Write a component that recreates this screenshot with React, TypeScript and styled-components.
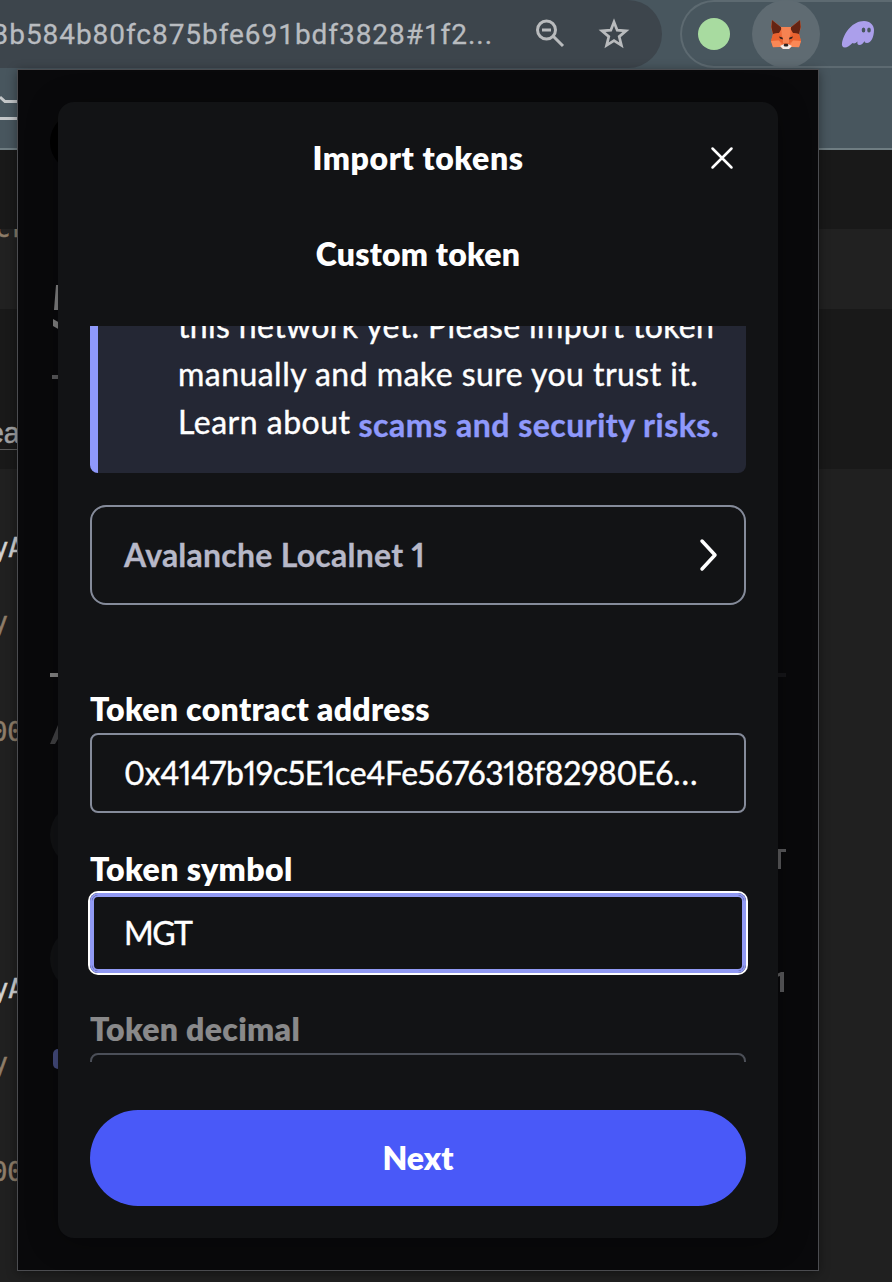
import React from "react";
import styled, { createGlobalStyle } from "styled-components";

const Global = createGlobalStyle`
  * { box-sizing: border-box; }
  html, body { margin: 0; background: #1f1f1f; }
  body { width: 892px; height: 1282px; overflow: hidden; font-family: Lato, "Open Sans", sans-serif; }
`;

const Page = styled.main`
  position: relative;
  width: 892px;
  height: 1282px;
  overflow: hidden;
  background: #202020;
`;

const BrowserBar = styled.header`
  height: 69px;
  display: flex;
  background: #48565e;
`;

const UrlBar = styled.div`
  width: 662px;
  flex: none;
  height: 68px;
  display: flex;
  align-items: center;
  background: #3d454c;
  border-radius: 0 34px 34px 0;
`;

const Url = styled.div`
  width: 493px;
  display: flex;
  justify-content: flex-end;
  white-space: nowrap;
  overflow: hidden;
  font: 400 28px/40px Roboto, sans-serif;
  padding-top: 2px;
  -webkit-text-stroke: 0.3px currentColor;
  letter-spacing: 0.95px;
  color: #b9bcc0;
`;

const ZoomIcon = styled.svg`
  width: 30px;
  height: 30px;
  margin-left: 42px;
`;

const StarIcon = styled.svg`
  width: 32px;
  height: 32px;
  margin: -3px 0 0 33px;
`;

const Extensions = styled.div`
  width: 212px;
  flex: none;
  height: 68px;
  margin-left: 18px;
  padding-left: 16px;
  display: flex;
  align-items: center;
  border: 2px solid #5d6a71;
  border-right: 0;
  border-radius: 34px 0 0 34px;
`;

const GreenDot = styled.i`
  width: 32px;
  height: 32px;
  flex: none;
  border-radius: 50%;
  background: #a8dba0;
`;

const FoxButton = styled.span`
  width: 68px;
  height: 68px;
  margin-left: 22px;
  flex: none;
  border-radius: 50%;
  background: #5f6b72;
  display: grid;
  place-items: center;
`;

const Ghost = styled.svg`
  width: 34px;
  height: 28px;
  flex: none;
  margin-left: 21px;
`;

const Strip = styled.div<{ $h: number; $bg: string; $line?: string }>`
  height: ${(p) => p.$h}px;
  background: ${(p) => p.$bg};
  border-bottom: ${(p) => (p.$line ? `2px solid ${p.$line}` : "0")};
  overflow: hidden;
`;

const TabGlyph = styled.svg`
  display: block;
  width: 18px;
  height: 26px;
  margin-top: 26px;
`;

const CodeLine = styled.div<{ $top: number; $color: string; $size?: number; $sans?: boolean }>`
  width: 18px;
  height: 36px;
  margin-top: ${(p) => p.$top}px;
  display: flex;
  justify-content: flex-end;
  overflow: hidden;
  white-space: nowrap;
  font: ${(p) => p.$size ?? 26}px/36px ${(p) => (p.$sans ? '"Liberation Sans", sans-serif' : '"DejaVu Sans Mono", monospace')};
  -webkit-text-stroke: 0.5px ${(p) => p.$color};
  color: ${(p) => p.$color};
`;

const CodeText = styled.span<{ $shift?: number }>`
  margin-right: ${(p) => p.$shift ?? 0}px;
`;

const Rule = styled.div`
  width: 18px;
  height: 1px;
  margin-top: -2px;
  background: #5a5a5a;
`;

const Popup = styled.section`
  position: absolute;
  left: 17px;
  top: 69px;
  width: 802px;
  height: 1202px;
  border: 1px solid #4b4c50;
  background: #09090b;
  box-shadow: 0 2px 10px rgba(0, 0, 0, 0.4);
`;

const Backdrop = styled.svg`
  position: absolute;
  inset: 0;
  width: 800px;
  height: 1200px;
`;

const Dialog = styled.div`
  position: relative;
  width: 720px;
  height: 1136px;
  margin: 32px 40px;
  border-radius: 16px;
  background: #121315;
  color: #fff;
  display: flex;
  flex-direction: column;
  box-shadow: 0 4px 32px rgba(0, 0, 0, 0.3);
  font-variant-numeric: proportional-nums;
`;

const Title = styled.h2<{ $ls: number }>`
  margin: 0;
  font-size: 32px;
  line-height: 48px;
  font-weight: 800;
  text-align: center;
  letter-spacing: ${(p) => p.$ls}px;
`;

const DialogHead = styled.div`
  height: 112px;
  padding: 32px 40px 0;
  display: grid;
  grid-template-columns: 32px 1fr 32px;
  align-items: start;
`;

const CloseIcon = styled.svg`
  width: 32px;
  height: 32px;
  margin-top: 8px;
`;

const SubHead = styled.div`
  height: 112px;
  padding-top: 16px;
`;

const Scroll = styled.div`
  height: 736px;
  margin: 0 30px;
  padding: 0 2px;
  overflow: hidden;
`;

const Notice = styled.div`
  height: 147px;
  overflow: hidden;
  padding-left: 80px;
  border-left: 8px solid #8f99fb;
  border-radius: 0 0 8px 8px;
  background: #242734;
  font-size: 32px;
  line-height: 48px;
  white-space: nowrap;
`;

const NoticeLines = styled.div`
  margin-top: -24px;
`;

const Line = styled.div<{ $ls: number }>`
  height: 48px;
  display: flex;
  -webkit-text-stroke: 0.4px currentColor;
  letter-spacing: ${(p) => p.$ls}px;
`;

const RiskLink = styled.a<{ $ls: number }>`
  color: #8f99fb;
  font-weight: 700;
  margin: 3px 0 0 8px;
  letter-spacing: ${(p) => p.$ls}px;
`;

const NetworkPicker = styled.div`
  height: 100px;
  margin: 32px 0 80px;
  padding: 0 19px 2px 32px;
  display: flex;
  align-items: center;
  justify-content: space-between;
  border: 2px solid #858b9a;
  border-radius: 16px;
  font-size: 32px;
  font-weight: 700;
  -webkit-text-stroke: 0.3px currentColor;
  color: #b7b8c8;
  letter-spacing: 0.25px;
`;

const Chevron = styled.svg`
  width: 32px;
  height: 40px;
  margin-top: 2px;
`;

const Field = styled.div<{ $dim?: boolean }>`
  height: 160px;
  opacity: ${(p) => (p.$dim ? 0.5 : 1)};
`;

const Label = styled.div<{ $ls: number }>`
  height: 48px;
  font-size: 32px;
  line-height: 48px;
  font-weight: 800;
  letter-spacing: ${(p) => p.$ls}px;
`;

const Input = styled.div<{ $focus?: boolean; $ls?: number }>`
  height: 80px;
  padding-left: 32px;
  border: 2px solid ${(p) => (p.$focus ? "#9099f3" : "#858b9a")};
  border-radius: 8px;
  box-shadow: ${(p) => (p.$focus ? "0 0 0 2px #fff, inset 0 0 0 2px #9099f3" : "none")};
  font-size: 32px;
  line-height: 76px;
  -webkit-text-stroke: 0.4px currentColor;
  white-space: nowrap;
  letter-spacing: ${(p) => p.$ls ?? 0}px;
`;

const Dots = styled.span`
  letter-spacing: 1px;
`;

const NextButton = styled.button`
  width: 656px;
  height: 96px;
  margin: 48px 32px 0;
  padding: 0;
  border: 0;
  border-radius: 48px;
  background: #4959f8;
  color: #fff;
  font: 800 32px/96px Lato, sans-serif;
`;

function Fox() {
  return (
    <svg width="30" height="29" viewBox="0 0 30 29">
      <path d="M1 0 10 7h10l9-7 1 7-2 7 2 7-2 6-7-.5-3 2.500h-6l-3-2.500L2 27l-2-6 2-7-2-7Z" fill="#ee6b3a" />
      <path d="M1 0 11 8 8 13l-6 1L.300 7ZM29 0 19 8l3 5 6 1 1.700-7Z" fill="#642312" />
      <path d="M10 7h10l-2 16h-6Z" fill="#f58352" />
      <path d="M8 13 2 14 0 21l7-1 5 3-1-6ZM22 13l6 1 2 7-7-1-5 3 1-6Z" fill="#e9622f" />
      <path d="m0 21 8-.5 3 4L9 27l-7 .3ZM30 21l-8-.5-3 4 2 2.500 7 .3Z" fill="#fa8856" />
      <path d="m9 26 4-2h4l4 2-3 3h-6Z" fill="#f2ece9" />
      <path d="m12.500 25 1-1.200h3l1 1.200-1 1.600h-3ZM8 16.500l3.500 1 .5 2-3-1ZM22 16.500l-3.500 1-.5 2 3-1Z" fill="#2c211f" />
    </svg>
  );
}

export default function App() {
  return (
    <Page>
      <Global />
      <BrowserBar>
        <UrlBar>
          <Url>3b584b80fc875bfe691bdf3828#1f2...</Url>
          <ZoomIcon viewBox="0 0 30 30" fill="none" stroke="#b9bbbd" strokeWidth="3">
            <circle cx="11.500" cy="11" r="9" />
            <path d="m18 17 10 10M7 11h9" />
          </ZoomIcon>
          <StarIcon viewBox="0 0 32 32" fill="none" stroke="#b9bbbd" strokeWidth="2.700">
            <path d="m16 5 3.200 8.200 8.800.7-6.800 5.700 2.200 8.700-7.400-4.700-7.400 4.700 2.200-8.700L4 13.900l8.800-.7Z" />
          </StarIcon>
        </UrlBar>
        <Extensions>
          <GreenDot />
          <FoxButton><Fox /></FoxButton>
          <Ghost viewBox="0 0 34 28">
            <path d="M1 23C3 12 12 1 23 1c6 0 10 4 10 9 0 7-3 13-7 13-2 0-2.500-1-2.500-2-1.500 2.500-3 4-5 4s-2.500-1.500-2-3.500c-2 2-3.500 2.500-5 1.500C9 25.500 6 27.500 4 27.500c-2.500 0-3.500-2-3-4.500Z" fill="#ab9feb" />
            <ellipse cx="22.500" cy="10" rx="1.800" ry="2.500" fill="#48565e" />
            <ellipse cx="28" cy="10" rx="1.800" ry="2.500" fill="#48565e" />
          </Ghost>
        </Extensions>
      </BrowserBar>
      <Strip $h={81} $bg="#48565e" $line="#6f7d82">
        <TabGlyph viewBox="0 0 18 26" fill="none" stroke="#c4c7c9" strokeWidth="3">
          <path d="M0 2l5 4.500h13M0 23.500h18" />
        </TabGlyph>
      </Strip>
      <Strip $h={79} $bg="#191919" />
      <Strip $h={80} $bg="#212121">
        <CodeLine $top={-19} $color="#8e7d69"><CodeText $shift={-8}>cr</CodeText></CodeLine>
      </Strip>
      <Strip $h={160} $bg="#191919">
        <CodeLine $top={106} $color="#a2a2a2" $size={29} $sans><CodeText $shift={-2}>ea</CodeText></CodeLine>
        <Rule />
      </Strip>
      <CodeLine $top={61} $color="#d2d2d2"><CodeText $shift={-6}>yA</CodeText></CodeLine>
      <CodeLine $top={38} $color="#8e7d69"><CodeText $shift={10}>y</CodeText></CodeLine>
      <CodeLine $top={74} $color="#8e7d69"><CodeText $shift={-5}>00</CodeText></CodeLine>
      <CodeLine $top={221} $color="#d2d2d2"><CodeText $shift={-6}>yA</CodeText></CodeLine>
      <CodeLine $top={38} $color="#8e7d69"><CodeText $shift={10}>y</CodeText></CodeLine>
      <CodeLine $top={73} $color="#8e7d69"><CodeText $shift={-5}>00</CodeText></CodeLine>

      <Popup>
        <Backdrop viewBox="18 70 800 1200">
          <circle cx="80" cy="142" r="30" fill="#000" />
          <path d="M56 285h6v25h-8ZM53 319l7 4v7l-7-4Z" fill="#808080" />
          <path d="M52 375h8v4h-8Z" fill="#59595b" />
          <path d="M50 673h10v4H50Z" fill="#858585" />
          <path d="M776 673h10v4h-10Z" fill="#151518" />
          <path d="m50 744 8-19v14l-3 5Z" fill="#414143" />
          <circle cx="82" cy="835" r="32" fill="#111214" />
          <circle cx="82" cy="959" r="32" fill="#111214" />
          <rect x="53" y="1049" width="20" height="20" rx="5" fill="#444b7d" />
          <path d="M775 849h11v3h-5v17h-3v-17h-3ZM777 974l4-2h3v20h-4v-16l-3 1Z" fill="#59595b" />
        </Backdrop>
        <Dialog>
          <DialogHead>
            <span />
            <Title $ls={0.6}>Import tokens</Title>
            <CloseIcon viewBox="0 0 32 32" fill="none" stroke="#fff" strokeWidth="2.500" strokeLinecap="round">
              <path d="m6.500 6.500 19 19M25.500 6.500l-19 19" />
            </CloseIcon>
          </DialogHead>
          <SubHead><Title $ls={0.2}>Custom token</Title></SubHead>
          <Scroll>
            <Notice>
              <NoticeLines>
                <Line $ls={0.36}>this network yet. Please import token</Line>
                <Line $ls={0.46}>manually and make sure you trust it.</Line>
                <Line $ls={0.5}>Learn about <RiskLink $ls={0.5}>scams and security risks.</RiskLink></Line>
              </NoticeLines>
            </Notice>
            <NetworkPicker>
              Avalanche Localnet 1
              <Chevron viewBox="0 0 32 40" fill="none" stroke="#fff" strokeWidth="3.500" strokeLinecap="round" strokeLinejoin="round">
                <path d="m9 6 13 14L9 34" />
              </Chevron>
            </NetworkPicker>
            <Field>
              <Label $ls={0.3}>Token contract address</Label>
              <Input $ls={-0.38}>0x4147b19c5E1ce4Fe5676318f82980E6<Dots>...</Dots></Input>
            </Field>
            <Field>
              <Label $ls={0.4}>Token symbol</Label>
              <Input $focus $ls={-1.5}>MGT</Input>
            </Field>
            <Field $dim>
              <Label $ls={0.3}>Token decimal</Label>
              <Input />
            </Field>
          </Scroll>
          <NextButton>Next</NextButton>
        </Dialog>
      </Popup>
    </Page>
  );
}
